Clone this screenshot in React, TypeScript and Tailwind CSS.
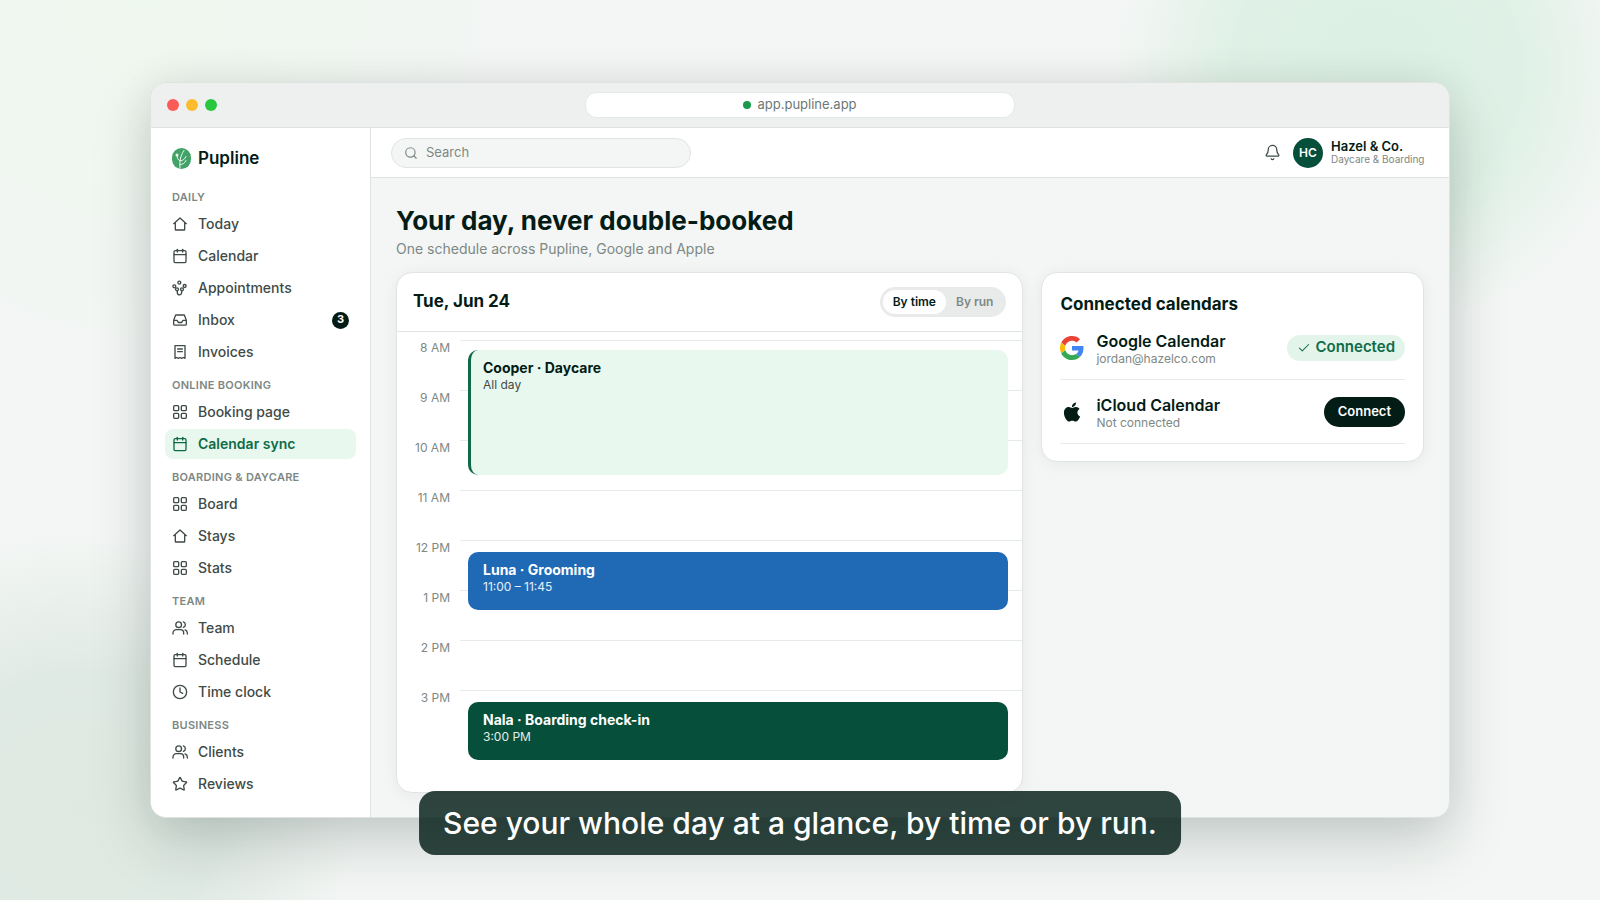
import { useState } from 'react';
import type { ReactNode } from 'react';
import { Bell, Calendar, Check, Clock, Search, Star } from 'lucide-react';
import { FaApple } from 'react-icons/fa';

type IconName = 'home' | 'calendar' | 'paw' | 'inbox' | 'invoice' | 'grid' | 'users' | 'clock' | 'star';

const sections: { title: string; items: { label: string; icon: IconName; badge?: number }[] }[] = [
  {
    title: 'Daily',
    items: [
      { label: 'Today', icon: 'home' },
      { label: 'Calendar', icon: 'calendar' },
      { label: 'Appointments', icon: 'paw' },
      { label: 'Inbox', icon: 'inbox', badge: 3 },
      { label: 'Invoices', icon: 'invoice' },
    ],
  },
  {
    title: 'Online booking',
    items: [
      { label: 'Booking page', icon: 'grid' },
      { label: 'Calendar sync', icon: 'calendar' },
    ],
  },
  {
    title: 'Boarding & daycare',
    items: [
      { label: 'Board', icon: 'grid' },
      { label: 'Stays', icon: 'home' },
      { label: 'Stats', icon: 'grid' },
    ],
  },
  {
    title: 'Team',
    items: [
      { label: 'Team', icon: 'users' },
      { label: 'Schedule', icon: 'calendar' },
      { label: 'Time clock', icon: 'clock' },
    ],
  },
  {
    title: 'Business',
    items: [
      { label: 'Clients', icon: 'users' },
      { label: 'Reviews', icon: 'star' },
    ],
  },
];

const hours = ['8 AM', '9 AM', '10 AM', '11 AM', '12 PM', '1 PM', '2 PM', '3 PM'];

// top and height are in pixels, one hour row is 50px
const events = [
  { title: 'Cooper · Daycare', time: 'All day', top: 18, height: 125, style: 'border-l-[3px] border-[#0f6b47] bg-[#e8f8ee] pl-3 text-[#031c16]', timeStyle: 'text-[#3f4b47]' },
  { title: 'Luna · Grooming', time: '11:00 – 11:45', top: 220, height: 58, style: 'bg-[#1f69b5] pl-[15px] text-white', timeStyle: 'text-white/90' },
  { title: 'Nala · Boarding check-in', time: '3:00 PM', top: 370, height: 58, style: 'bg-[#064f3b] pl-[15px] text-white', timeStyle: 'text-white/90' },
];

function NavIcon({ name }: { name: IconName }) {
  const cls = 'size-4 shrink-0';
  if (name === 'calendar') return <Calendar className={cls} strokeWidth={2} />;
  if (name === 'clock') return <Clock className={cls} strokeWidth={2} />;
  if (name === 'star') return <Star className={cls} strokeWidth={2} />;

  let shape: ReactNode = null;
  if (name === 'home') shape = <path d="M2.5 11.5 12 3l9.5 8.5M5 9.500v10.700a.8.8 0 0 0 .8.8h12.400a.8.8 0 0 0 .8-.8V9.500" />;
  if (name === 'inbox')
    shape = <path d="M2.500 12.500h5l2 3.200h5l2-3.200h5M5.500 4.500h13l3 8V18a1.8 1.8 0 0 1-1.8 1.8H4.300A1.8 1.8 0 0 1 2.500 18v-5.500z" />;
  if (name === 'invoice') shape = <path d="M4.500 2.500h15v19l-2.500-1.300-2.500 1.300-2.500-1.300-2.500 1.300-2.500-1.300-2.500 1.300zM8.500 7.500h7M8.500 11.500h7" />;
  if (name === 'grid')
    shape = (
      <>
        <rect x="2.500" y="2.500" width="7.500" height="7.500" rx="1.500" />
        <rect x="14" y="2.500" width="7.500" height="7.500" rx="1.500" />
        <rect x="2.500" y="14" width="7.500" height="7.500" rx="1.500" />
        <rect x="14" y="14" width="7.500" height="7.500" rx="1.500" />
      </>
    );
  if (name === 'users')
    shape = (
      <>
        <circle cx="10" cy="7" r="4.300" />
        <path d="M1.500 21v-1.500a5 5 0 0 1 5-5h6a5 5 0 0 1 5 5V21M17 2.900a4.300 4.300 0 0 1 0 8.200M19.500 14.800a5 5 0 0 1 3.500 4.700V21" />
      </>
    );
  if (name === 'paw')
    shape = (
      <>
        <circle cx="3.500" cy="9.500" r="2.200" />
        <circle cx="11" cy="4" r="2.200" />
        <circle cx="19" cy="9" r="2.200" />
        <circle cx="7.500" cy="14" r="2.200" />
        <circle cx="15" cy="14" r="2.200" />
        <path d="M8 16.500v2.500a3.200 3.200 0 0 0 6.400 0v-2.500" />
      </>
    );

  return (
    <svg className={cls} viewBox="0 0 24 24" fill="none" stroke="currentColor" strokeWidth="2" strokeLinecap="round" strokeLinejoin="round" aria-hidden="true">
      {shape}
    </svg>
  );
}

function Logo() {
  return (
    <svg className="h-[21px] w-[19px]" viewBox="0 0 38 42" fill="none" aria-hidden="true">
      <rect width="38" height="42" rx="19" fill="#42a267" />
      <path d="M16 40c-1-12 0-24 8-35M17 26c5-1 9-4 11-9M16 33c6 0 10-3 12-8M16 26c-4-2-6-6-6-12" stroke="#e6f6ea" strokeWidth="2" strokeLinecap="round" />
      <circle cx="10" cy="14" r="3" fill="#e6f6ea" />
    </svg>
  );
}

function GoogleLogo() {
  return (
    <svg className="size-6" viewBox="0 0 48 48" aria-hidden="true">
      <path fill="#EA4335" d="M24 9.5c3.540 0 6.710 1.220 9.210 3.600l6.850-6.850C35.900 2.380 30.470 0 24 0 14.620 0 6.510 5.380 2.560 13.220l7.980 6.190C12.430 13.720 17.740 9.500 24 9.500z" />
      <path fill="#4285F4" d="M46.980 24.550c0-1.570-.15-3.090-.38-4.550H24v9.020h12.940c-.58 2.960-2.260 5.480-4.780 7.180l7.730 6c4.510-4.180 7.090-10.360 7.090-17.650z" />
      <path fill="#FBBC05" d="M10.530 28.590c-.48-1.450-.76-2.990-.76-4.590s.27-3.140.76-4.590l-7.980-6.190C.92 16.460 0 20.120 0 24c0 3.880.92 7.540 2.560 10.780l7.970-6.190z" />
      <path fill="#34A853" d="M24 48c6.480 0 11.930-2.130 15.890-5.810l-7.730-6c-2.150 1.450-4.920 2.300-8.160 2.300-6.260 0-11.570-4.220-13.470-9.910l-7.980 6.190C6.510 42.620 14.620 48 24 48z" />
    </svg>
  );
}

function Sidebar() {
  return (
    <aside className="w-[220px] shrink-0 border-r border-[#dfe4e2] bg-white px-3.5 pt-5">
      <div className="flex h-[21px] items-center gap-[7px] pl-[7px]">
        <Logo />
        <span className="text-[17px] font-semibold text-[#031c16]">Pupline</span>
      </div>
      <nav className="mt-5 flex flex-col gap-2.5">
        {sections.map((section) => (
          <div key={section.title} className="flex flex-col gap-0.5">
            <h2 className="mb-0.5 pl-[7px] text-[11px] leading-4 font-semibold tracking-wide text-[#7d8884] uppercase">{section.title}</h2>
            {section.items.map((item) => (
              <a
                key={item.label}
                href="#"
                className={`flex h-[30px] items-center gap-2.5 rounded-lg px-[7px] text-sm ${
                  item.label === 'Calendar sync' ? 'bg-[#e8f8ee] font-semibold text-[#0f6b47]' : 'font-medium text-[#3f4b47]'
                }`}
              >
                <NavIcon name={item.icon} />
                {item.label}
                {item.badge && (
                  <span className="ml-auto flex size-[17px] items-center justify-center rounded-full bg-[#031c16] text-[11px] font-bold text-white">
                    {item.badge}
                  </span>
                )}
              </a>
            ))}
          </div>
        ))}
      </nav>
    </aside>
  );
}

function TopBar() {
  return (
    <header className="flex h-[50px] items-center justify-between border-b border-[#dfe4e2] bg-white px-5">
      <label className="flex h-[30px] w-[300px] items-center gap-2 rounded-full border border-[#e0e4e2] bg-[#f4f6f5] px-3 text-[#7d8884]">
        <Search className="size-3.5" strokeWidth={2} />
        <input type="search" aria-label="Search" placeholder="Search" className="min-w-0 flex-1 bg-transparent text-[13px] outline-none placeholder:text-[#7d8884]" />
      </label>
      <div className="flex items-center">
        <button type="button" aria-label="Notifications" className="mr-3 text-[#3f4b47]">
          <Bell className="size-[17px]" strokeWidth={1.8} />
        </button>
        <span className="mr-2 flex size-[30px] items-center justify-center rounded-full bg-[#064f3b] text-xs font-semibold text-white">HC</span>
        <div className="min-w-[98px]">
          <p className="text-[13px] leading-[13px] font-semibold text-[#031c16]">Hazel &amp; Co.</p>
          <p className="text-[10px] leading-[13px] text-[#7d8884]">Daycare &amp; Boarding</p>
        </div>
      </div>
    </header>
  );
}

function DayCard() {
  const [view, setView] = useState('By time');

  return (
    <section className="overflow-hidden rounded-2xl border border-[#e0e4e2] bg-white shadow-[0_2px_16px_rgba(3,28,22,0.06)]">
      <div className="flex h-[59px] items-center justify-between border-b border-[#dfe4e2] px-4">
        <h2 className="text-[17px] font-bold text-[#031c16]">Tue, Jun 24</h2>
        <div className="flex h-[30px] rounded-full bg-[#e8ebea] p-[3px]">
          {['By time', 'By run'].map((option) => (
            <button
              key={option}
              type="button"
              onClick={() => setView(option)}
              className={`rounded-full px-2.5 text-xs font-semibold ${view === option ? 'bg-white text-[#031c16]' : 'text-[#7d8884]'}`}
            >
              {option}
            </button>
          ))}
        </div>
      </div>
      <div className="relative pt-2 pb-[52px]">
        {hours.map((hour) => (
          <div key={hour} className="flex h-[50px]">
            <span className="w-[53px] text-right text-xs leading-4 text-[#7d8884]">{hour}</span>
            <span className="ml-2.5 flex-1 border-t border-[#e6eae8]" />
          </div>
        ))}
        {events.map((event) => (
          <div
            key={event.title}
            className={`absolute right-3.5 left-[71px] rounded-[10px] pt-[9px] ${event.style}`}
            style={{ top: event.top, height: event.height }}
          >
            <p className="text-sm leading-[18px] font-bold">{event.title}</p>
            <p className={`text-xs leading-4 ${event.timeStyle}`}>{event.time}</p>
          </div>
        ))}
      </div>
    </section>
  );
}

function CalendarRow({ logo, name, detail, children }: { logo: ReactNode; name: string; detail: string; children: ReactNode }) {
  return (
    <li className="flex h-16 items-center border-b border-[#e6eae8]">
      <span className="mr-3 flex size-6 items-center justify-center text-[#031c16]">{logo}</span>
      <div className="flex-1 pt-1">
        <p className="text-base leading-[18px] font-semibold text-[#031c16]">{name}</p>
        <p className="text-xs leading-[18px] text-[#7d8884]">{detail}</p>
      </div>
      {children}
    </li>
  );
}

export default function App() {
  return (
    <div className="relative flex min-h-screen items-center justify-center overflow-hidden bg-[#f3f6f4] bg-[radial-gradient(circle_at_86%_8%,#ddf0e4_0%,#dff1e6_9%,transparent_16%),radial-gradient(circle_at_5%_90%,#dfe9e2_0%,#e0eae4_8%,transparent_16%),radial-gradient(circle_at_9%_0%,#eef7ee_0%,transparent_20%)] px-[150px] py-10 font-['Inter',sans-serif]">
      <div className="w-full overflow-hidden rounded-2xl border border-[#dfe4e2] bg-[#f4f6f5] shadow-[0_24px_60px_rgba(3,28,22,0.18),0_0_40px_rgba(3,28,22,0.06)]">
        <div className="flex h-[45px] items-center border-b border-[#dfe4e2] bg-[#eef0ef] px-4">
          <div className="flex flex-1 gap-[7px]">
            <span className="size-3 rounded-full bg-[#fc5b57]" />
            <span className="size-3 rounded-full bg-[#fdbc2e]" />
            <span className="size-3 rounded-full bg-[#27c840]" />
          </div>
          <div className="flex h-[26px] w-[34%] items-center justify-center gap-1.5 rounded-xl border border-[#e4e8e6] bg-white text-[13px] text-[#6d7874]">
            <span className="size-2 rounded-full bg-[#1a9a4c]" />
            app.pupline.app
          </div>
          <div className="flex-1" />
        </div>

        <div className="flex">
          <Sidebar />
          <div className="min-w-0 flex-1">
            <TopBar />
            <main className="px-[25px] pt-[23px] pb-6">
              <h1 className="text-[26px] leading-10 font-bold text-[#031c16]">Your day, never double-booked</h1>
              <p className="text-sm leading-4 text-[#7d8884]">One schedule across Pupline, Google and Apple</p>
              <div className="mt-[15px] grid grid-cols-[1.64fr_1fr] items-start gap-[18px]">
                <DayCard />
                <section className="rounded-2xl border border-[#e0e4e2] bg-white px-[18px] pt-[19px] pb-[17px] shadow-[0_2px_16px_rgba(3,28,22,0.06)]">
                  <h2 className="text-[17px] leading-6 font-bold text-[#031c16]">Connected calendars</h2>
                  <ul>
                    <CalendarRow logo={<GoogleLogo />} name="Google Calendar" detail="jordan@hazelco.com">
                      <span className="flex h-[26px] items-center gap-1 rounded-full bg-[#e3f4ea] px-2.5 text-[15px] font-semibold text-[#0f6b47]">
                        <Check className="size-3.5" strokeWidth={1.8} />
                        Connected
                      </span>
                    </CalendarRow>
                    <CalendarRow logo={<FaApple className="size-[22px]" />} name="iCloud Calendar" detail="Not connected">
                      <button type="button" className="h-[30px] rounded-full bg-[#031c16] px-3.5 text-[13px] font-semibold text-white">
                        Connect
                      </button>
                    </CalendarRow>
                  </ul>
                </section>
              </div>
            </main>
          </div>
        </div>
      </div>

      <p className="absolute bottom-[45px] left-1/2 flex h-16 -translate-x-1/2 items-center rounded-2xl bg-[#031c16]/82 px-6 text-[30px] font-medium whitespace-nowrap text-white">
        See your whole day at a glance, by time or by run.
      </p>
    </div>
  );
}
